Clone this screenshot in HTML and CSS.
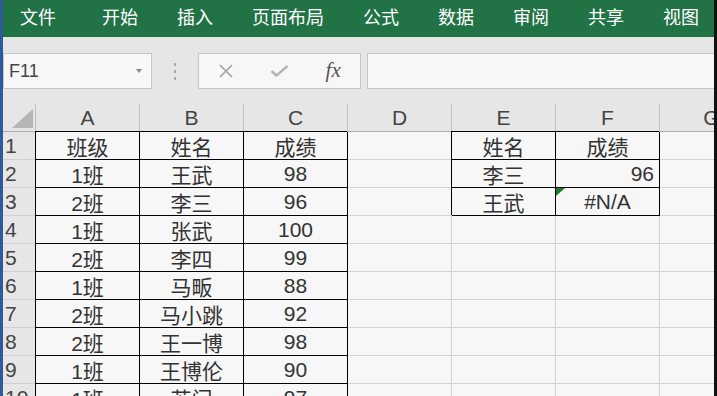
FILE: index.html
```html
<!DOCTYPE html>
<html lang="zh-CN">
<head>
    <meta charset="UTF-8">
    <title>成绩表 - Excel</title>
    <link rel="stylesheet" href="styles.css">
</head>
<body>
    <div class="window">
        <div class="ribbon">
            <span class="tab first">文件</span>
            <span class="tab">开始</span>
            <span class="tab">插入</span>
            <span class="tab">页面布局</span>
            <span class="tab">公式</span>
            <span class="tab">数据</span>
            <span class="tab">审阅</span>
            <span class="tab">共享</span>
            <span class="tab">视图</span>
        </div>

        <div class="formula-bar">
            <div class="name-box">
                <span>F11</span>
                <span class="caret"></span>
            </div>
            <div class="grip"><i></i><i></i><i></i></div>
            <div class="fx-buttons">
                <span class="fx-slot">
                    <svg width="16" height="14" viewBox="0 0 16 14"><path d="M2 1 L14 13 M14 1 L2 13" stroke="#a3a3a3" stroke-width="1.7" fill="none"/></svg>
                </span>
                <span class="fx-slot">
                    <svg width="19" height="12" viewBox="0 0 19 12"><path d="M1.5 6 L6.5 10.5 L17.5 1" stroke="#b5b5b5" stroke-width="2.4" fill="none"/></svg>
                </span>
                <span class="fx-slot fx">fx</span>
            </div>
            <div class="formula-input"></div>
        </div>

        <div class="sheet">
            <!-- 列标题 -->
            <div class="corner"><div class="corner-tri"></div></div>
            <div class="hd">A</div>
            <div class="hd">B</div>
            <div class="hd">C</div>
            <div class="hd">D</div>
            <div class="hd">E</div>
            <div class="hd">F</div>
            <div class="hd">G</div>

            <!-- 1 -->
            <div class="rh">1</div>
            <div class="c bk">班级</div>
            <div class="c bk">姓名</div>
            <div class="c bk">成绩</div>
            <div class="c"></div>
            <div class="c bk">姓名</div>
            <div class="c bk">成绩</div>
            <div class="c"></div>

            <!-- 2 -->
            <div class="rh">2</div>
            <div class="c bk">1班</div>
            <div class="c bk">王武</div>
            <div class="c bk">98</div>
            <div class="c"></div>
            <div class="c bk">李三</div>
            <div class="c bk num">96</div>
            <div class="c"></div>

            <!-- 3 -->
            <div class="rh">3</div>
            <div class="c bk">2班</div>
            <div class="c bk">李三</div>
            <div class="c bk">96</div>
            <div class="c"></div>
            <div class="c bk">王武</div>
            <div class="c bk err">#N/A</div>
            <div class="c"></div>

            <!-- 4 -->
            <div class="rh">4</div>
            <div class="c bk">1班</div>
            <div class="c bk">张武</div>
            <div class="c bk">100</div>
            <div class="c"></div>
            <div class="c"></div>
            <div class="c"></div>
            <div class="c"></div>

            <!-- 5 -->
            <div class="rh">5</div>
            <div class="c bk">2班</div>
            <div class="c bk">李四</div>
            <div class="c bk">99</div>
            <div class="c"></div>
            <div class="c"></div>
            <div class="c"></div>
            <div class="c"></div>

            <!-- 6 -->
            <div class="rh">6</div>
            <div class="c bk">1班</div>
            <div class="c bk">马畈</div>
            <div class="c bk">88</div>
            <div class="c"></div>
            <div class="c"></div>
            <div class="c"></div>
            <div class="c"></div>

            <!-- 7 -->
            <div class="rh">7</div>
            <div class="c bk">2班</div>
            <div class="c bk">马小跳</div>
            <div class="c bk">92</div>
            <div class="c"></div>
            <div class="c"></div>
            <div class="c"></div>
            <div class="c"></div>

            <!-- 8 -->
            <div class="rh">8</div>
            <div class="c bk">2班</div>
            <div class="c bk">王一博</div>
            <div class="c bk">98</div>
            <div class="c"></div>
            <div class="c"></div>
            <div class="c"></div>
            <div class="c"></div>

            <!-- 9 -->
            <div class="rh">9</div>
            <div class="c bk">1班</div>
            <div class="c bk">王博伦</div>
            <div class="c bk">90</div>
            <div class="c"></div>
            <div class="c"></div>
            <div class="c"></div>
            <div class="c"></div>

            <!-- 10 -->
            <div class="rh">10</div>
            <div class="c bk">1班</div>
            <div class="c bk">苏门</div>
            <div class="c bk">97</div>
            <div class="c"></div>
            <div class="c"></div>
            <div class="c"></div>
            <div class="c"></div>
        </div>
    </div>
</body>
</html>
```

FILE: styles.css
```css
:root {
    --excel-green: #217346;
    --toolbar-bg: #e6e6e6;
    --cell-bg: #f7f7f7;
    --grid-line: #d4d4d4;
    --box-border: #c6c6c6;
}

html, body {
    margin: 0;
    height: 100%;
}

body {
    font-family: "Liberation Sans", "Noto Sans CJK SC", sans-serif;
    background: var(--toolbar-bg);
    overflow: hidden;
}

.window {
    height: 396px;
    border-left: 3px solid #2d5a98;
    border-right: 3px solid #111;
    display: flex;
    flex-direction: column;
    overflow: hidden;
}

/* 顶部菜单栏 */
.ribbon {
    height: 37px;
    flex: none;
    background: var(--excel-green);
    display: flex;
    align-items: center;
    gap: 39px;
    padding-left: 17px;
    padding-bottom: 6px;
    box-sizing: border-box;
}

.tab {
    color: #fff;
    font-family: "Noto Sans CJK SC", sans-serif;
    font-size: 18px;
    line-height: 1;
}

.tab.first {
    margin-right: 7px;
}

/* 编辑栏 */
.formula-bar {
    height: 67px;
    flex: none;
    display: flex;
    align-items: flex-start;
    padding-top: 16px;
    box-sizing: border-box;
}

.name-box {
    width: 149px;
    height: 36px;
    box-sizing: border-box;
    background: var(--cell-bg);
    border: 1px solid var(--box-border);
    display: flex;
    align-items: center;
    justify-content: space-between;
    padding: 0 9px 0 5px;
    font-size: 18px;
    color: #444;
}

.caret {
    width: 0;
    height: 0;
    border-left: 3px solid transparent;
    border-right: 3px solid transparent;
    border-top: 4px solid #888;
}

.grip {
    width: 46px;
    height: 36px;
    display: flex;
    flex-direction: column;
    align-items: center;
    justify-content: center;
    gap: 4px;
}

.grip i {
    width: 2px;
    height: 3px;
    background: #a9a9a9;
}

.fx-buttons {
    width: 163px;
    height: 36px;
    box-sizing: border-box;
    background: var(--cell-bg);
    border: 1px solid var(--box-border);
    display: flex;
    align-items: center;
}

.fx-slot {
    width: 54px;
    display: flex;
    justify-content: center;
    align-items: center;
}

.fx {
    font-family: "Liberation Serif", serif;
    font-style: italic;
    font-size: 21px;
    color: #555;
    padding-bottom: 2px;
}

.formula-input {
    flex: 1;
    height: 36px;
    margin-left: 6px;
    box-sizing: border-box;
    background: var(--cell-bg);
    border: 1px solid var(--box-border);
    border-right: none;
}

/* 表格 */
.sheet {
    flex: 1;
    display: grid;
    grid-template-columns: 33px repeat(7, 104px);
    grid-auto-rows: 28px;
    overflow: hidden;
    font-size: 21px;
    color: #333;
}

.sheet > div {
    box-sizing: border-box;
    border-right: 1px solid var(--grid-line);
    border-bottom: 1px solid var(--grid-line);
    display: flex;
    align-items: center;
    justify-content: center;
    white-space: nowrap;
    overflow: hidden;
}

.corner {
    background: var(--toolbar-bg);
    border-right-color: #bdbdbd !important;
    border-bottom-color: #ababab !important;
    justify-content: flex-end !important;
    align-items: flex-end !important;
    padding: 0 2px 3px 0;
}

.corner-tri {
    width: 21px;
    height: 19px;
    background: #b6b6b6;
    clip-path: polygon(100% 0, 100% 100%, 0 100%);
}

.hd {
    background: var(--toolbar-bg);
    color: #444;
    border-right-color: #c3c3c3 !important;
    border-bottom-color: #ababab !important;
}

.rh {
    background: var(--toolbar-bg);
    color: #444;
    justify-content: flex-start !important;
    padding-left: 2px;
    border-right-color: #ababab !important;
    border-bottom-color: #d0d0d0 !important;
}

.c {
    background: var(--cell-bg);
}

.bk {
    border-right-color: #000 !important;
    border-bottom-color: #000 !important;
    box-shadow: -1px -1px 0 #000;
}

.num {
    justify-content: flex-end !important;
    padding-right: 5px;
}

.err {
    position: relative;
}

.err::before {
    content: "";
    position: absolute;
    left: 0;
    top: 0;
    border-top: 8px solid #1e7b2f;
    border-right: 9px solid transparent;
}
```
